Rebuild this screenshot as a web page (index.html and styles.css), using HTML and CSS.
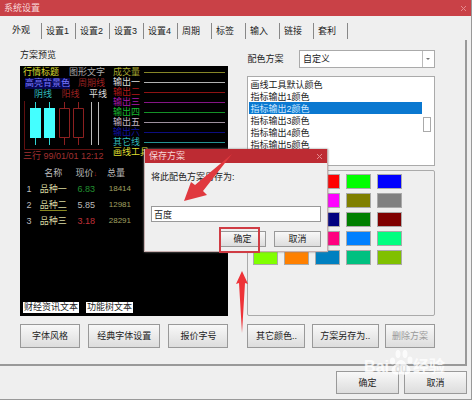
FILE: index.html
```html
<!DOCTYPE html>
<html lang="zh-CN">

<head>
    <meta charset="UTF-8">
    <title>系统设置</title>
    <link rel="stylesheet" href="styles.css">
</head>

<body>
    <div class="window">
        <div class="title_bar">
            <span>系统设置</span>
            <button class="close" aria-label="关闭"><svg width="7" height="7" viewBox="0 0 7 7"><path d="M1 1L6 6M6 1L1 6"/></svg></button>
        </div>

        <div class="tabs" role="tablist">
            <button class="tab active" role="tab">外观</button>
            <button class="tab" role="tab">设置1</button>
            <button class="tab" role="tab">设置2</button>
            <button class="tab" role="tab">设置3</button>
            <button class="tab" role="tab">设置4</button>
            <button class="tab" role="tab">周期</button>
            <button class="tab" role="tab">标签</button>
            <button class="tab" role="tab">输入</button>
            <button class="tab" role="tab">链接</button>
            <button class="tab" role="tab">套利</button>
        </div>

        <div class="page">
            <div class="column">
                <div class="caption">方案预览</div>
                <div class="preview">
                    <div class="preview_top">
                        <div class="chart">
                            <div class="line"><span class="yellow">行情标题</span><span class="gray">图形文字</span></div>
                            <div class="line second"><span class="highlight">高亮背景色</span><span class="dark_red">周期线</span></div>
                            <div class="line kinds"><span class="cyan">阴线</span><span class="dark_red">阳线</span><span class="white">平线</span></div>
                            <svg class="candles" width="84" height="50" viewBox="0 0 84 50">
                                <path d="M1.500 0V48.500H80" stroke="#601010" fill="none"/>
                                <path d="M12.500 1V44M26.500 1V44" stroke="#2fd5d5"/>
                                <path d="M7 7h11v30h-11zM21 7h11v30h-11z" fill="#4ff"/>
                                <path d="M41.500 1V7M41.500 37V44M55.500 1V7M55.500 37V44M36.500 7.500h10v29h-10zM50.500 7.500h10v29h-10z" stroke="#8c2020" fill="none"/>
                                <path d="M68.500 1V44M75.500 1V44" stroke="#bbb"/>
                            </svg>
                            <div class="date">三行 99/01/01 12:12</div>
                        </div>
                        <div class="outputs">
                            <div class="output khaki"><span>成交量</span><i></i></div>
                            <div class="output white"><span>输出一</span><i></i></div>
                            <div class="output red"><span>输出二</span><i></i></div>
                            <div class="output purple"><span>输出三</span><i></i></div>
                            <div class="output green"><span>输出四</span><i></i></div>
                            <div class="output pale"><span>输出五</span><i></i></div>
                            <div class="output blue"><span>输出六</span><i></i></div>
                            <div class="output cyan"><span>其它线</span><i></i></div>
                            <div class="output yellow"><span>画线工具</span></div>
                        </div>
                    </div>
                    <table class="quotes">
                        <tr><th></th><th>名称</th><th>现价<b>↓</b></th><th>总量</th></tr>
                        <tr><td>1</td><td class="name">品种一</td><td class="up">6.83</td><td class="total">18414</td></tr>
                        <tr><td>2</td><td class="name"><u>品种二</u></td><td>5.85</td><td class="total">12981</td></tr>
                        <tr><td>3</td><td class="name">品种三</td><td class="down">3.18</td><td class="total">28291</td></tr>
                    </table>
                    <div class="text_tags"><span>财经资讯文本</span><span>功能树文本</span></div>
                </div>
                <div class="actions left">
                    <button>字体风格</button>
                    <button class="wide">经典字体设置</button>
                    <button>报价字号</button>
                </div>
            </div>

            <div class="column">
                <div class="scheme">
                    <label for="scheme">配色方案</label>
                    <div class="select_box">
                        <select id="scheme"><option>自定义</option></select>
                        <span class="drop"></span>
                    </div>
                </div>
                <div class="list_box">
                    <select class="color_list" size="7" aria-label="颜色项目">
                        <option>画线工具默认颜色</option>
                        <option>指标输出1颜色</option>
                        <option selected>指标输出2颜色</option>
                        <option>指标输出3颜色</option>
                        <option>指标输出4颜色</option>
                        <option>指标输出5颜色</option>
                        <option>指标输出6颜色</option>
                    </select>
                    <span class="thumb"></span>
                </div>
                <div class="palette">
                    <i class="c_black"></i><i class="c_white"></i><i class="c_red"></i><i class="c_lime"></i><i class="c_blue"></i>
                    <i class="c_yellow"></i><i class="c_aqua"></i><i class="c_magenta"></i><i class="c_olive"></i><i class="c_gray"></i>
                    <i class="c_silver"></i><i class="c_teal"></i><i class="c_navy"></i><i class="c_green"></i><i class="c_maroon"></i>
                    <i class="c_purple"></i><i class="c_violet"></i><i class="c_pink"></i><i class="c_azure"></i><i class="c_spring"></i>
                    <i class="c_chartreuse"></i><i class="c_orange"></i><i class="c_steel"></i><i class="c_jade"></i><i class="c_moss"></i>
                </div>
                <div class="actions right">
                    <button>其它颜色..</button>
                    <button class="wide">方案另存为..</button>
                    <button disabled>删除方案</button>
                </div>
            </div>
        </div>

        <div class="footer">
            <button>确定</button>
            <button>取消</button>
        </div>

        <!-- save dialog -->
        <div class="dialog" role="dialog" aria-label="保存方案">
            <div class="title_bar small">
                <span>保存方案</span>
                <button class="close" aria-label="关闭"><svg width="7" height="7" viewBox="0 0 7 7"><path d="M1 1L6 6M6 1L1 6"/></svg></button>
            </div>
            <div class="dialog_body">
                <label for="save_name">将此配色方案另存为:</label>
                <input id="save_name" type="text" value="百度">
                <div class="dialog_buttons">
                    <button>确定</button>
                    <button>取消</button>
                </div>
            </div>
        </div>

        <!-- annotations -->
        <svg class="marks" width="472" height="400" viewBox="0 0 472 400">
            <rect x="220" y="228" width="39" height="24" fill="none" stroke="#d03c44" stroke-width="2"/>
            <path d="M232 154L203 191L207 195L184 201L191 182L195 185Z" fill="#e0393f"/>
            <path d="M242 271L248 284L245 283L242 333L239 283L236 284Z" fill="#ee3338"/>
        </svg>
        <div class="watermark">
            <span>Bai</span>
            <svg width="24" height="28" viewBox="0 0 24 28"><ellipse cx="3.500" cy="12" rx="2.500" ry="3.500"/><ellipse cx="9" cy="5" rx="2.500" ry="4"/><ellipse cx="16" cy="5" rx="2.500" ry="4"/><ellipse cx="21" cy="11" rx="2.500" ry="3.500"/><path d="M12 11Q15 11 17 15Q23 19 21 23Q19 27 12 25Q5 27 3 23Q1 19 7 15Q9 11 12 11Z"/><text x="6" y="23">du</text></svg>
            <span>经验</span>
        </div>
    </div>
</body>

</html>
```

FILE: styles.css
```css
* {
    box-sizing: border-box;
}

body {
    margin: 0;
    background: #efefef;
    color: #222;
    font-family: "Liberation Sans", "Noto Sans CJK SC", sans-serif;
    font-size: 9px;
    line-height: 12px;
}

button, input, select {
    font: inherit;
    color: inherit;
    margin: 0;
    padding: 0;
    border-radius: 0;
}

.window {
    position: relative;
    display: flex;
    flex-direction: column;
    min-height: 100vh;
    padding-bottom: 5px;
    border: solid #999;
    border-width: 0 1px 1px 0;
}

.title_bar {
    display: flex;
    align-items: center;
    justify-content: space-between;
    height: 16px;
    padding: 0 4px;
    background: #c94147;
    color: #f8d8d8;
}

.title_bar.small {
    height: 14px;
    background: #bd2b33;
}

.close {
    display: flex;
    border: 0;
    background: none;
}

.close path {
    stroke: #e58a8e;
    stroke-width: 1;
}

.tabs {
    display: flex;
    height: 24px;
    padding: 7px 0 1px 8px;
}

.tab {
    width: 34px;
    border: 0;
    border-right: 1px solid #888;
    background: none;
    text-align: left;
    padding-left: 4px;
    white-space: nowrap;
}

.tab.active {
    padding-bottom: 2px;
}

.page {
    display: grid;
    grid-template-columns: 10fr 9fr;
    column-gap: 19px;
    flex: 1;
    margin-right: 4px;
    padding: 9px 30px 16px 20px;
    border: solid #999;
    border-width: 0 2px 2px 0;
}

.column {
    display: flex;
    flex-direction: column;
    min-width: 0;
}

.caption {
    height: 17px;
}

.preview {
    display: flex;
    flex-direction: column;
    flex: 1;
    padding: 1px 3px 3px;
    background: #000;
}

.preview_top {
    display: grid;
    grid-template-columns: 90px 1fr;
}

.line {
    display: flex;
    justify-content: space-between;
    height: 11px;
    line-height: 11px;
    padding-right: 8px;
}

.line.second {
    padding-left: 2px;
}

.line.kinds {
    padding: 0 6px 0 11px;
}

.candles {
    display: block;
    margin-top: 1px;
}

.date {
    color: #a03030;
    line-height: 10px;
}

.output {
    display: flex;
    align-items: center;
    gap: 4px;
    height: 10px;
    line-height: 10px;
    white-space: nowrap;
}

.output i {
    flex: 1;
    border-top: 1px solid;
    opacity: 0.8;
}

.yellow { color: #dede30; }
.khaki { color: #a8a830; }
.gray { color: #aaa; }
.highlight { color: #7777ff; background: #080850; }
.dark_red { color: #9c2020; }
.white { color: #ddd; }
.red { color: #b01818; }
.purple { color: #a818a8; }
.green { color: #18b830; }
.pale { color: #c4b4c4; }
.blue { color: #1010a0; }
.cyan { color: #30b8b8; }

.quotes {
    width: 108px;
    margin-top: 4px;
    border-collapse: collapse;
    color: #bbb;
}

.quotes th, .quotes td {
    height: 16px;
    padding: 0;
    line-height: 12px;
    font-weight: normal;
    text-align: center;
}

.quotes td:first-child {
    width: 12px;
}

.quotes b {
    color: #b02020;
    font-weight: normal;
    font-size: 7px;
}

.quotes .name {
    color: #d8d8a0;
}

.quotes u {
    text-decoration-color: #888820;
    text-underline-offset: 2px;
}

.quotes .up {
    color: #209030;
}

.quotes .down {
    color: #c03038;
}

.quotes .total {
    color: #a0a060;
    font-size: 8px;
    text-align: right;
}

.text_tags {
    display: flex;
    gap: 7px;
    margin-top: auto;
}

.text_tags span {
    height: 11px;
    padding: 0 1px;
    background: #fff;
    line-height: 11px;
}

.actions {
    display: flex;
    justify-content: space-between;
    height: 24px;
    margin-top: 8px;
}

.actions button, .footer button, .dialog_buttons button {
    border: 1px solid #999;
    background: linear-gradient(#f8f8f8, #ddd);
}

.actions.left button {
    width: 60px;
}

.actions.left .wide {
    width: 72px;
}

.actions.right button {
    width: 58px;
}

.actions.right .wide {
    width: 67px;
}

.actions.right button:disabled {
    width: 50px;
    color: #999;
}

.scheme {
    display: flex;
    align-items: center;
    justify-content: space-between;
    height: 19px;
}

.select_box {
    position: relative;
    width: 136px;
    height: 18px;
}

.select_box select {
    appearance: none;
    width: 100%;
    height: 100%;
    padding-left: 3px;
    border: 1px solid #aaa;
    background: #fff;
}

.drop {
    position: absolute;
    top: 1px;
    right: 1px;
    bottom: 1px;
    width: 12px;
    border-left: 1px solid #bbb;
    pointer-events: none;
}

.drop::after {
    content: "";
    position: absolute;
    top: 7px;
    left: 3px;
    border: 2px solid transparent;
    border-top-color: #777;
}

.list_box {
    position: relative;
    height: 90px;
    margin-top: 8px;
    padding: 1px 12px 0 1px;
    border: 1px solid #aaa;
    background: #fff;
}

.color_list {
    display: block;
    width: 100%;
    height: 86px;
    border: 0;
    outline: 0;
    background: #fff;
    overflow: hidden;
    scrollbar-width: none;
}

.color_list option {
    height: 12px;
    min-height: 12px;
    padding: 0 1px;
    line-height: 12px;
}

.color_list option:checked {
    background: #0a78d0 linear-gradient(#0a78d0, #0a78d0);
    color: #fff;
    -webkit-text-fill-color: #d0e8ff;
}

.thumb {
    position: absolute;
    top: 40px;
    right: 3px;
    width: 8px;
    height: 15px;
    border: 1px solid #aaa;
    background: #fff;
}

.palette {
    display: grid;
    grid-template-columns: repeat(5, 25px);
    grid-auto-rows: 15px;
    align-content: start;
    gap: 4px 6px;
    flex: 1;
    margin-top: 4px;
    padding: 3px 5px;
    border: 1px solid #aaa;
    border-radius: 2px;
}

.palette i {
    border: 1px solid #aaa;
}

.c_black { background: #000; }
.c_white { background: #fff; }
.c_red { background: #f00; }
.c_lime { background: #0f0; }
.c_blue { background: #00f; }
.c_yellow { background: #ff0; }
.c_aqua { background: #0ff; }
.c_magenta { background: #f0f; }
.c_olive { background: #808000; }
.c_gray { background: #808080; }
.c_silver { background: #c0c0c0; }
.c_teal { background: #008080; }
.c_navy { background: #000080; }
.c_green { background: #008000; }
.c_maroon { background: #800000; }
.c_purple { background: #800080; }
.c_violet { background: #8000ff; }
.c_pink { background: #ff0080; }
.c_azure { background: #0080ff; }
.c_spring { background: #00ff80; }
.c_chartreuse { background: #80ff00; }
.c_orange { background: #ff8000; }
.c_steel { background: #0080c0; }
.c_jade { background: #00c080; }
.c_moss { background: #80c000; }

.footer {
    display: flex;
    justify-content: flex-end;
    gap: 5px;
    height: 28px;
    padding: 5px 4px 0 0;
}

.footer button {
    width: 63px;
}

.dialog {
    position: absolute;
    top: 149px;
    left: 144px;
    width: 184px;
    border: 1px solid #c8b0b0;
    border-top: 0;
    background: #efefef;
    box-shadow: 0 0 2px #888;
}

.dialog_body {
    padding: 8px 6px 4px;
}

.dialog_body label {
    display: block;
}

.dialog_body input {
    display: block;
    width: 100%;
    height: 16px;
    margin-top: 23px;
    padding: 0 2px;
    border: 1px solid #999;
    background: #fff;
}

.dialog_buttons {
    display: flex;
    justify-content: flex-end;
    gap: 8px;
    height: 16px;
    margin-top: 9px;
}

.dialog_buttons button {
    width: 47px;
}

.marks {
    position: absolute;
    top: 0;
    left: 0;
    pointer-events: none;
}

.watermark {
    position: absolute;
    right: 26px;
    bottom: 22px;
    display: flex;
    align-items: flex-end;
    color: #fff;
    font-size: 16px;
    font-weight: bold;
    line-height: 20px;
    opacity: 0.8;
    pointer-events: none;
}

.watermark svg {
    fill: #fff;
}

.watermark text {
    fill: #ddd;
    font-size: 10px;
}
```
